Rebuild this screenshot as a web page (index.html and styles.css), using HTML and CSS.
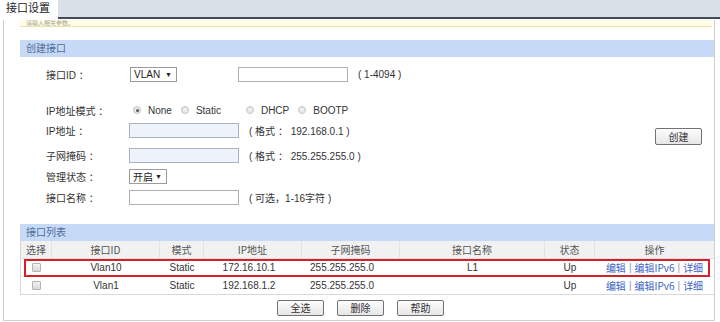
FILE: index.html
```html
<!DOCTYPE html>
<html lang="zh-CN">

<head>
	<meta charset="UTF-8" />
	<title>接口设置</title>
	<link rel="stylesheet" href="styles.css">
</head>

<body>
	<div class="tabbar">
		<div class="tab">接口设置</div>
	</div>
	<div class="page">
		<div class="notice"><span>请输入相关参数。</span></div>

		<div class="section-title">创建接口</div>
		<div class="create">
			<div class="fields">
				<div class="row r1">
					<span class="label">接口ID ：</span>
					<span class="select vlan">VLAN<i>▼</i></span>
					<span class="input id-input"></span>
					<span class="hint">( 1-4094 )</span>
				</div>
				<div class="row r2">
					<span class="label">IP地址模式 ：</span>
					<span class="radio checked"></span><span class="opt">None</span>
					<span class="radio"></span><span class="opt">Static</span>
					<span class="radio dhcp"></span><span class="opt">DHCP</span>
					<span class="radio"></span><span class="opt">BOOTP</span>
				</div>
				<div class="row r3">
					<span class="label">IP地址 ：</span>
					<span class="input disabled"></span>
					<span class="hint">( 格式 ： 192.168.0.1 )</span>
				</div>
				<div class="row r4">
					<span class="label">子网掩码 ：</span>
					<span class="input disabled"></span>
					<span class="hint">( 格式 ： 255.255.255.0 )</span>
				</div>
				<div class="row r5">
					<span class="label">管理状态 ：</span>
					<span class="select state">开启<i>▼</i></span>
				</div>
				<div class="row r6">
					<span class="label">接口名称 ：</span>
					<span class="input"></span>
					<span class="hint">( 可选，1-16字符 )</span>
				</div>
			</div>
			<div class="side">
				<button class="btn">创建</button>
			</div>
		</div>

		<div class="section-title">接口列表</div>
		<div class="list">
			<div class="list-row head">
				<span>选择</span>
				<span>接口ID</span>
				<span>模式</span>
				<span>IP地址</span>
				<span>子网掩码</span>
				<span>接口名称</span>
				<span>状态</span>
				<span>操作</span>
			</div>
			<div class="list-row">
				<span><i class="check"></i></span>
				<span>Vlan10</span>
				<span>Static</span>
				<span class="ip">172.16.10.1</span>
				<span class="mask">255.255.255.0</span>
				<span>L1</span>
				<span>Up</span>
				<span class="ops"><a>编辑</a> | <a>编辑IPv6</a> | <a>详细</a></span>
			</div>
			<div class="list-row">
				<span><i class="check"></i></span>
				<span>Vlan1</span>
				<span>Static</span>
				<span class="ip">192.168.1.2</span>
				<span class="mask">255.255.255.0</span>
				<span></span>
				<span>Up</span>
				<span class="ops"><a>编辑</a> | <a>编辑IPv6</a> | <a>详细</a></span>
			</div>
			<!-- highlight around the first row -->
			<div class="mark"></div>
		</div>

		<div class="actions">
			<button class="btn">全选</button>
			<button class="btn">删除</button>
			<button class="btn">帮助</button>
		</div>
	</div>
</body>

</html>
```

FILE: styles.css
```css
body {
	margin: 0;
	width: 720px;
	height: 322px;
	overflow: hidden;
	background-color: white;
	color: #333;
	font-family: "Liberation Sans", "Noto Sans CJK SC", sans-serif;
	font-size: 10px;
}

.tabbar {
	display: flex;
	align-items: flex-start;
	height: 17px;
	background-color: #d9e0e8;
	border-bottom: 2px solid #434c56;
}

.tab {
	width: 58px;
	height: 19px;
	padding-left: 6px;
	box-sizing: border-box;
	background-color: white;
	color: #222;
	font-size: 11px;
	line-height: 17px;
}

.page {
	margin-left: 3px;
	width: 712px;
	height: 301px;
	box-sizing: border-box;
	padding: 0 0 0 16px;
	border-left: 1px solid #cfcfcf;
	border-right: 1px solid #cfcfcf;
	border-bottom: 1px solid #cfcfcf;
}

.notice {
	margin-top: 1px;
	margin-right: 2px;
	height: 6px;
	overflow: hidden;
	background-color: #fffce6;
	border-bottom: 1px solid #eee3a6;
	color: #a8a490;
	font-size: 6px;
	line-height: 6px;
	padding-left: 6px;
}

.section-title {
	height: 17px;
	margin-top: 13px;
	padding-left: 6px;
	background-color: #c6d9f6;
	color: #4f6d9c;
	font-size: 10px;
	line-height: 17px;
}

.create + .section-title {
	margin-top: 0;
}

.create {
	display: flex;
	padding-bottom: 18px;
}

.fields {
	flex: 1;
	padding-left: 26px;
}

.row {
	display: flex;
	align-items: center;
	height: 18px;
}

.r1 {
	margin-top: 9px;
	height: 17px;
}

.r2 {
	margin-top: 18px;
}

.r3 {
	margin-top: 2px;
}

.r4 {
	margin-top: 7px;
}

.r5,
.r6 {
	margin-top: 3px;
}

.label {
	width: 83px;
	flex-shrink: 0;
}

.select {
	display: flex;
	align-items: center;
	justify-content: space-between;
	height: 15px;
	box-sizing: border-box;
	padding: 0 4px 0 3px;
	border: 1px solid #9c9c9c;
	background-color: white;
	color: #222;
}

.select i {
	font-style: normal;
	font-size: 7px;
}

.vlan {
	width: 47px;
	margin-left: 1px;
}

.state {
	width: 38px;
}

.input {
	width: 110px;
	height: 15px;
	box-sizing: border-box;
	border: 1px solid #b0b0b0;
	background-color: white;
}

.input.disabled {
	background-color: #eef2fa;
	border-color: #aab3c4;
}

.id-input {
	margin-left: 61px;
}

.hint {
	margin-left: 10px;
}

.radio {
	width: 8px;
	height: 8px;
	box-sizing: border-box;
	border-radius: 50%;
	border: 1px solid #c4c4c4;
	background: radial-gradient(circle, #f6f6f6 0%, #dcdcdc 100%);
	margin-left: 9px;
	margin-right: 7px;
	position: relative;
}

.r2 .label + .radio {
	margin-left: 4px;
}

.radio.checked::after {
	content: "";
	position: absolute;
	left: 1.5px;
	top: 1.5px;
	width: 3px;
	height: 3px;
	border-radius: 50%;
	background-color: #555;
}

.radio.dhcp {
	margin-left: 25px;
}

.opt {
	color: #333;
}

.side {
	width: 59px;
	padding-top: 71px;
}

.btn {
	width: 47px;
	height: 17px;
	padding: 0;
	border: 1px solid #6f7377;
	border-radius: 2px;
	background: linear-gradient(#fdfdfd, #e6e6e6);
	color: #333;
	font-family: "Noto Sans CJK SC", sans-serif;
	font-size: 10px;
	line-height: 14px;
}

/* interface list */
.list {
	position: relative;
	border-left: 1px solid #d6d6d6;
}

.list-row {
	display: grid;
	grid-template-columns: 31px 108px 44px 98px 98px 145px 50px 1fr;
	height: 18px;
	box-sizing: border-box;
	border-bottom: 1px solid #d8d8d8;
}

.list-row:nth-child(2) {
	border-bottom-color: #ececec;
}

.list-row span {
	display: flex;
	align-items: center;
	justify-content: center;
	white-space: nowrap;
}

.list-row.head {
	background-color: #f1f1f1;
	border-bottom-color: #e0e0e0;
	color: #555;
	font-family: "Noto Sans CJK SC", sans-serif;
}

.list-row.head span {
	border-right: 1px solid #e2e2e2;
}

.list-row.head span:last-child {
	border-right: none;
}

.list-row .ip {
	padding-right: 8px;
}

.list-row .mask {
	padding-right: 18px;
}

.check {
	display: block;
	width: 9px;
	height: 9px;
	box-sizing: border-box;
	border: 1px solid #b4b4b4;
	border-radius: 1px;
	background: linear-gradient(#f2f2f2, #d9d9d9);
}

.list-row .ops {
	color: #8a95b0;
	gap: 3px;
}

.ops a {
	color: #3b63c4;
	font-family: "Noto Sans CJK SC", sans-serif;
}

.mark {
	position: absolute;
	left: 3px;
	top: 18px;
	width: 686px;
	height: 18px;
	box-sizing: border-box;
	border: 2px solid #d4202a;
}

.actions {
	display: flex;
	justify-content: center;
	gap: 13px;
	margin-top: 5px;
	padding-right: 13px;
}

.actions .btn {
	height: 16px;
}
```
